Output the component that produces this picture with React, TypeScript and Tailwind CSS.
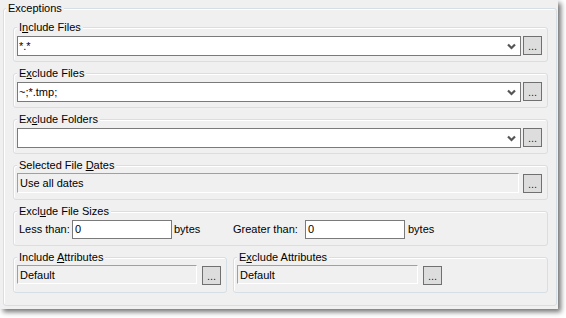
import React from 'react';

function Group({ label, className = '', children }: { label: React.ReactNode; className?: string; children: React.ReactNode }) {
    return (
        <fieldset className={'rounded-[3px] border border-[#d5dfe5] shadow-[inset_1px_1px_0_#fff] ' + className}>
            <legend className="ml-[3px] px-[2px] leading-[13px] bg-[#f0f0f0]">{label}</legend>
            {children}
        </fieldset>
    );
}

function Dots() {
    return (
        <button className="w-[19px] h-[19px] shrink-0 border border-[#707070] bg-[#dddddd] text-[#1e1e4a] text-[11px] leading-[11px] flex items-end justify-center pb-[2px]">
            ...
        </button>
    );
}

function Combo({ value }: { value: string }) {
    return (
        <div className="flex-1 h-[20px] bg-white border border-[#7a7a7a] flex items-center pl-[1px] pr-[4px]">
            <span className="flex-1">{value}</span>
            <svg width="9" height="7" viewBox="0 0 9 7">
                <path d="M1 1.5 L4.5 5 L8 1.5" fill="none" stroke="#555" strokeWidth="2.2" />
            </svg>
        </div>
    );
}

function Sunken({ value, className = '' }: { value: string; className?: string }) {
    return (
        <div className={'border-t border-l border-t-[#a0a0a0] border-l-[#a0a0a0] border-b border-r border-b-white border-r-white flex items-center pl-[2px] pt-[1px] ' + className}>
            {value}
        </div>
    );
}

export default function App() {
    return (
        <div className="w-[566px] h-[318px] bg-white font-['Liberation_Sans',Arial,sans-serif] text-[11px] text-black">
            <div className="w-[558px] h-[309px] bg-[#f0f0f0] shadow-[3px_3px_5px_rgba(0,0,0,0.55)] pl-[3px] pt-[2px]">
                <fieldset className="w-[554px] h-[304px] rounded-[3px] border border-[#d5dfe5] shadow-[inset_1px_1px_0_#fff]">
                    <legend className="ml-[2px] px-[2px] leading-[13px] bg-[#f0f0f0]">Exceptions</legend>
                    <div className="pl-[9px] pr-[8px] pt-[6px] flex flex-col gap-[5px]">
                        <Group label={<>I<u>n</u>clude Files</>}>
                            <div className="pl-[3px] pr-[5px] pt-[2px] pb-[5px] flex items-start gap-[2px]">
                                <Combo value="*.*" />
                                <Dots />
                            </div>
                        </Group>
                        <Group label={<>E<u>x</u>clude Files</>}>
                            <div className="pl-[3px] pr-[5px] pt-[2px] pb-[5px] flex items-start gap-[2px]">
                                <Combo value="~;*.tmp;" />
                                <Dots />
                            </div>
                        </Group>
                        <Group label={<>Ex<u>c</u>lude Folders</>}>
                            <div className="pl-[3px] pr-[5px] pt-[2px] pb-[5px] flex items-start gap-[2px]">
                                <Combo value="" />
                                <Dots />
                            </div>
                        </Group>
                        <Group label={<>Selected File <u>D</u>ates</>}>
                            <div className="pl-[3px] pr-[5px] pt-[1px] pb-[6px] flex items-start gap-[4px]">
                                <Sunken value="Use all dates" className="flex-1 h-[20px]" />
                                <div className="mt-[1px]"><Dots /></div>
                            </div>
                        </Group>
                        <Group label={<>Excl<u>u</u>de File Sizes</>}>
                            <div className="pl-[5px] pt-[2px] pb-[6px] flex items-center">
                                <div className="w-[214px] flex items-center">
                                    <span className="w-[53px]">Less than:</span>
                                    <div className="w-[100px] h-[19px] bg-white border border-[#7a7a7a] pl-[2px] flex items-center">0</div>
                                    <span className="ml-[2px]">bytes</span>
                                </div>
                                <span className="w-[72px]">Greater than:</span>
                                <div className="w-[100px] h-[19px] bg-white border border-[#7a7a7a] pl-[2px] flex items-center">0</div>
                                <span className="ml-[3px]">bytes</span>
                            </div>
                        </Group>
                        <div className="flex gap-[6px]">
                            <Group label={<>Include <u>A</u>ttributes</>} className="w-[214px]">
                                <div className="pl-[3px] pt-[1px] pb-[7px] flex items-start gap-[5px]">
                                    <Sunken value="Default" className="w-[180px] h-[19px]" />
                                    <div className="mt-[1px]"><Dots /></div>
                                </div>
                            </Group>
                            <Group label={<>E<u>x</u>clude Attributes</>} className="flex-1">
                                <div className="pl-[3px] pt-[1px] pb-[7px] flex items-start gap-[5px]">
                                    <Sunken value="Default" className="w-[181px] h-[19px]" />
                                    <div className="mt-[1px]"><Dots /></div>
                                </div>
                            </Group>
                        </div>
                    </div>
                </fieldset>
            </div>
        </div>
    );
}
